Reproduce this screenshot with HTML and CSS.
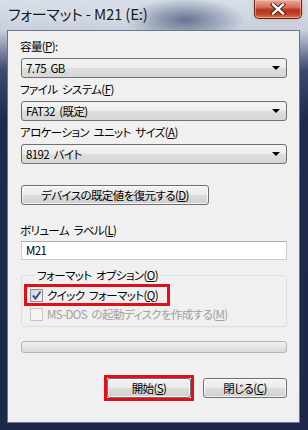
FILE: index.html
```html
<!DOCTYPE html>
<html lang="ja">
<head>
<meta charset="utf-8">
<link rel="stylesheet" href="styles.css">
</head>
<body>
<div class="window">
  <div class="titlebar">
    <div class="title">フォーマット - M21 (E:)</div>
    <div class="close">
      <svg width="16" height="12" viewBox="0 0 16 12"><path d="M3 1.5 L13 10.5 M13 1.5 L3 10.5" stroke="#3a1a14" stroke-width="4.2" stroke-linecap="square" fill="none"/><path d="M3 1.5 L13 10.5 M13 1.5 L3 10.5" stroke="#ffffff" stroke-width="2.4" stroke-linecap="square" fill="none"/></svg>
    </div>
  </div>
  <div class="client">
    <div class="label l1">容量(<u>P</u>):</div>
    <div class="combo"><span>7.75 GB</span><i class="arrow"></i></div>
    <div class="label">ファイル システム(<u>F</u>)</div>
    <div class="combo"><span>FAT32 (既定)</span><i class="arrow"></i></div>
    <div class="label">アロケーション ユニット サイズ(<u>A</u>)</div>
    <div class="combo"><span>8192 バイト</span><i class="arrow"></i></div>
    <div class="btn wide">デバイスの既定値を復元する(<u>D</u>)</div>
    <div class="label l5">ボリューム ラベル(<u>L</u>)</div>
    <div class="textbox">M21</div>
    <fieldset class="group">
      <legend>フォーマット オプション(<u>O</u>)</legend>
      <div class="check hl">
        <span class="box on"><svg width="11" height="11" viewBox="0 0 11 11"><path d="M2 5.5 L4.5 8.5 L9.5 1.5" stroke="#3d4f8a" stroke-width="2" fill="none"/></svg></span>
        <span>クイック フォーマット(<u>Q</u>)</span>
      </div>
      <div class="check disabled">
        <span class="box"></span>
        <span>MS-DOS の起動ディスクを作成する(<u>M</u>)</span>
      </div>
    </fieldset>
    <div class="progress"></div>
    <div class="actions">
      <div class="hlbtn"><div class="btn">開始(<u>S</u>)</div></div>
      <div class="btn">閉じる(<u>C</u>)</div>
    </div>
  </div>
</div>
</body>
</html>
```
FILE: styles.css
```css
* { box-sizing: border-box; }
html, body { margin: 0; padding: 0; }
body {
  width: 308px; height: 430px; overflow: hidden;
  font-family: "Noto Sans CJK JP", "Noto Sans", sans-serif;
  font-feature-settings: "palt";
}
.window {
  width: 308px; height: 430px;
  display: flex; flex-direction: column;
  padding: 0 8px 7px 7px;
  background:
    radial-gradient(ellipse 60px 22px at 185px 20px, rgba(60,75,110,0.7), rgba(60,75,110,0) 100%),
    linear-gradient(180deg, rgba(215,222,232,1) 0px, rgba(200,208,222,1) 30px, rgba(60,72,110,1) 70px, #1f2a4e 120px, #1c2749 430px);
}
.titlebar {
  height: 30px; flex: none;
  display: flex; justify-content: space-between; align-items: flex-start;
}
.title {
  margin-top: 4px; margin-left: 1px;
  font-size: 15px; line-height: 20px; color: #1a1a1a;
  letter-spacing: -0.2px;
  text-shadow: 0 0 8px rgba(255,255,255,0.9);
}
.close {
  width: 48px; height: 19px; margin-right: -2px;
  border: 1px solid #5a2a20; border-top: none;
  border-radius: 0 0 5px 5px;
  background: linear-gradient(180deg, #e9a898 0%, #d4715a 40%, #b8301a 55%, #c4442a 80%, #e07a52 100%);
  box-shadow: 0 0 4px rgba(255,140,100,0.7), inset 0 0 0 1px rgba(255,210,200,0.5);
  display: flex; align-items: center; justify-content: center;
}
.client {
  flex: 1;
  background: #f0f0f0;
  border: 1px solid #6d7689;
  padding: 0 12px 0 13px;
  display: flex; flex-direction: column;
  font-size: 11.5px; letter-spacing: -0.6px; word-spacing: 2.5px; color: #000;
}
.label {
  line-height: 15px; height: 15px;
  margin-top: 4px; margin-left: -1px;
  white-space: nowrap;
}
.l1 { margin-top: 8px; }
u { text-decoration: underline; text-underline-offset: 1px; }
.combo {
  height: 20px; margin-top: 4px;
  border: 1px solid #707070; border-radius: 3px;
  background: linear-gradient(180deg, #f3f3f3 0%, #ececec 50%, #dedede 51%, #d6d6d6 100%);
  display: flex; align-items: center; justify-content: space-between;
  padding: 0 6px 0 4px;
  line-height: 18px;
}
.arrow {
  width: 0; height: 0;
  border-left: 4px solid transparent; border-right: 4px solid transparent;
  border-top: 4px solid #000;
}
.btn {
  height: 20px;
  border: 1px solid #707070; border-radius: 3px;
  background: linear-gradient(180deg, #f2f2f2 0%, #ebebeb 50%, #dddddd 51%, #cfcfcf 100%);
  box-shadow: inset 0 0 0 1px rgba(255,255,255,0.7);
  line-height: 18px; text-align: center;
  white-space: nowrap;
}
.wide { width: 188px; margin-top: 21px; }
.l5 { margin-top: 18px; }
.textbox {
  height: 19px; margin-top: 3px;
  background: #fff;
  border: 1px solid #c8ccd4; border-top-color: #abadb3;
  line-height: 17px; padding-left: 4px;
}
.group {
  margin: 8px 0 0 0; padding: 5px 0 0 8px;
  border: 1px solid #d5dfe5; border-radius: 3px;
  height: 59px;
}
.group legend {
  line-height: 14px; padding: 0 1px; margin-left: 6px;
}
.check {
  display: flex; align-items: center; gap: 4px;
  line-height: 15px; height: 16px;
  white-space: nowrap;
}
.check.hl {
  outline: 3px solid #e0101a; outline-offset: 0;
  width: fit-content; margin-left: -3px; padding: 0 9px 0 3px;
}
.check.disabled { color: #a0a0a0; margin-top: 3px; }
.box {
  width: 13px; height: 13px; flex: none;
  border: 1px solid #8e8f8f;
  background: linear-gradient(135deg, #dcdcdc, #fbfbfb);
  display: flex; align-items: center; justify-content: center;
}
.box.on { background: linear-gradient(135deg, #cfd4dc, #f8f8f8); }
.check.disabled .box { border-color: #c5c5c5; background: #f4f4f4; }
.progress {
  height: 12px; margin-top: 14px;
  border: 1px solid #b2b2b2; border-radius: 3px;
  background: linear-gradient(180deg, #f3f3f3 0%, #e4e4e4 50%, #d8d8d8 100%);
}
.actions {
  display: flex; justify-content: flex-end; align-items: center; gap: 12px;
  margin-top: 25px;
}
.actions .btn { width: 84px; }
.hlbtn {
  outline: 3px solid #e0101a; outline-offset: 0;
}
```
